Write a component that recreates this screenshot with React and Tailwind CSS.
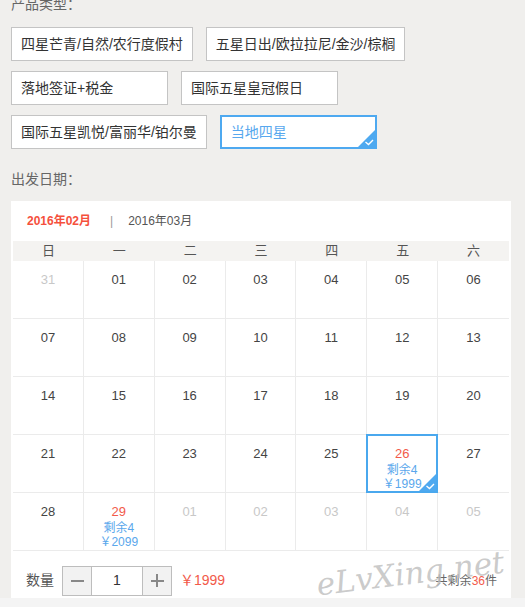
import React from "react";

function Check({ size = 17 }) {
  return (
    <svg width={size} height={size} viewBox="0 0 17 17" className="absolute right-0 bottom-0">
      <polygon points="17,0 17,17 0,17" fill="#4ea9f0" />
      <polyline points="7.5,12 10.5,14.5 15,10" fill="none" stroke="#fff" strokeWidth="1.4" />
    </svg>
  );
}

function Opt({ children, selected }) {
  if (selected) {
    return (
      <div className="relative h-[34px] min-w-[157px] border-2 border-[#4ea9f0] bg-white pl-[9px] pr-[8px] flex items-center text-[14px] text-[#58a8ee]">
        {children}
        <Check size={17} />
      </div>
    );
  }
  return (
    <div className="h-[34px] min-w-[157px] border border-[#c4c4c4] bg-white px-[9px] flex items-center text-[14px] text-[#333]">
      {children}
    </div>
  );
}

const N = (n, t = "n") => ({ n, t });
const rows = [
  [N("31", "d"), N("01"), N("02"), N("03"), N("04"), N("05"), N("06")],
  [N("07"), N("08"), N("09"), N("10"), N("11"), N("12"), N("13")],
  [N("14"), N("15"), N("16"), N("17"), N("18"), N("19"), N("20")],
  [N("21"), N("22"), N("23"), N("24"), N("25"), { n: "26", t: "sel", left: "剩余4", price: "￥1999" }, N("27")],
  [N("28"), { n: "29", t: "avail", left: "剩余4", price: "￥2099" }, N("01", "d"), N("02", "d"), N("03", "d"), N("04", "d"), N("05", "d")],
];

function Cell({ c, last }) {
  const isRed = c.t === "sel" || c.t === "avail";
  return (
    <div className={"relative h-[58px] border-b border-[#ebebeb] pt-[10px] flex flex-col items-center " + (last ? "" : "border-r")}>
      <div className={"text-[13px] leading-[18px] " + (c.t === "d" ? "text-[#c8c8c8]" : isRed ? "text-[#f25a4a]" : "text-[#444]")}>{c.n}</div>
      {c.left && (
        <>
          <div className="text-[12px] leading-[14px] text-[#5aa7ec]">{c.left}</div>
          <div className="text-[12px] leading-[14px] text-[#5aa7ec]">{c.price}</div>
        </>
      )}
      {c.t === "sel" && (
        <div className="absolute left-[-1px] top-[-1px] w-[72px] h-[59px] border-2 border-[#4aa8ee]">
          <Check size={17} />
        </div>
      )}
    </div>
  );
}

export default function App() {
  return (
    <div className="relative w-[525px] h-[607px] overflow-hidden bg-[#f0efed] font-['Liberation_Sans','Noto_Sans_CJK_SC',sans-serif]">
      <div className="pl-[11px]">
        <div className="-mt-[6px] h-[33px] text-[14px] leading-[20px] text-[#666]">产品类型：</div>
        <div className="flex flex-col gap-[10px]">
          <div className="flex gap-[13px]">
            <Opt>四星芒青/自然/农行度假村</Opt>
            <Opt>五星日出/欧拉拉尼/金沙/棕榈</Opt>
          </div>
          <div className="flex gap-[13px]">
            <Opt>落地签证+税金</Opt>
            <Opt>国际五星皇冠假日</Opt>
          </div>
          <div className="flex gap-[13px]">
            <Opt>国际五星凯悦/富丽华/铂尔曼</Opt>
            <Opt selected>当地四星</Opt>
          </div>
        </div>
        <div className="mt-[20px] h-[20px] text-[14px] leading-[20px] text-[#666]">出发日期：</div>
        <div className="mt-[12px] w-[500px] bg-white px-[2px]">
          <div className="h-[40px] flex items-center pl-[14px] text-[12px]">
            <span className="font-bold text-[#f5503c]">2016年02月</span>
            <span className="ml-[19px] text-[#999]">|</span>
            <span className="ml-[15px] text-[#555]">2016年03月</span>
          </div>
          <div className="grid grid-cols-7 h-[20px] bg-[#f4f3f1] text-[13px] leading-[20px] text-[#555] text-center">
            {["日", "一", "二", "三", "四", "五", "六"].map((d) => (
              <div key={d}>{d}</div>
            ))}
          </div>
          {rows.map((r, i) => (
            <div key={i} className="grid grid-cols-7">
              {r.map((c, j) => (
                <Cell key={j} c={c} last={j === 6} />
              ))}
            </div>
          ))}
          <div className="h-[47px] pt-[12px] flex items-center pl-[13px] pr-[12px]">
            <span className="text-[14px] text-[#555]">数量</span>
            <div className="ml-[8px] flex h-[30px] w-[110px] border border-[#bdbdbd]">
              <div className="w-[29px] border-r border-[#bdbdbd] bg-[#f2f2f2] flex items-center justify-center">
                <div className="w-[13px] h-[2px] bg-[#888]" />
              </div>
              <div className="w-[51px] border-r border-[#bdbdbd] bg-white flex items-center justify-center text-[14px] text-[#333]">1</div>
              <div className="flex-1 bg-[#f2f2f2] flex items-center justify-center relative">
                <div className="w-[13px] h-[2px] bg-[#888]" />
                <div className="absolute w-[2px] h-[13px] bg-[#888]" />
              </div>
            </div>
            <span className="ml-[8px] text-[14px] text-[#f25a4a]">￥1999</span>
            <span className="ml-auto text-[12px] text-[#666]">
              共剩余<span className="text-[#f25a4a]">36</span>件
            </span>
          </div>
        </div>
      </div>
      <div className="h-[9px] bg-[#f4f4f4]" />
      <div className="absolute left-[316px] top-[550px] -rotate-[7deg] text-[31px] italic text-[#bdbdbd]/80 font-['DejaVu_Serif',serif] pointer-events-none whitespace-nowrap">
        eLvXing.net
      </div>
    </div>
  );
}
